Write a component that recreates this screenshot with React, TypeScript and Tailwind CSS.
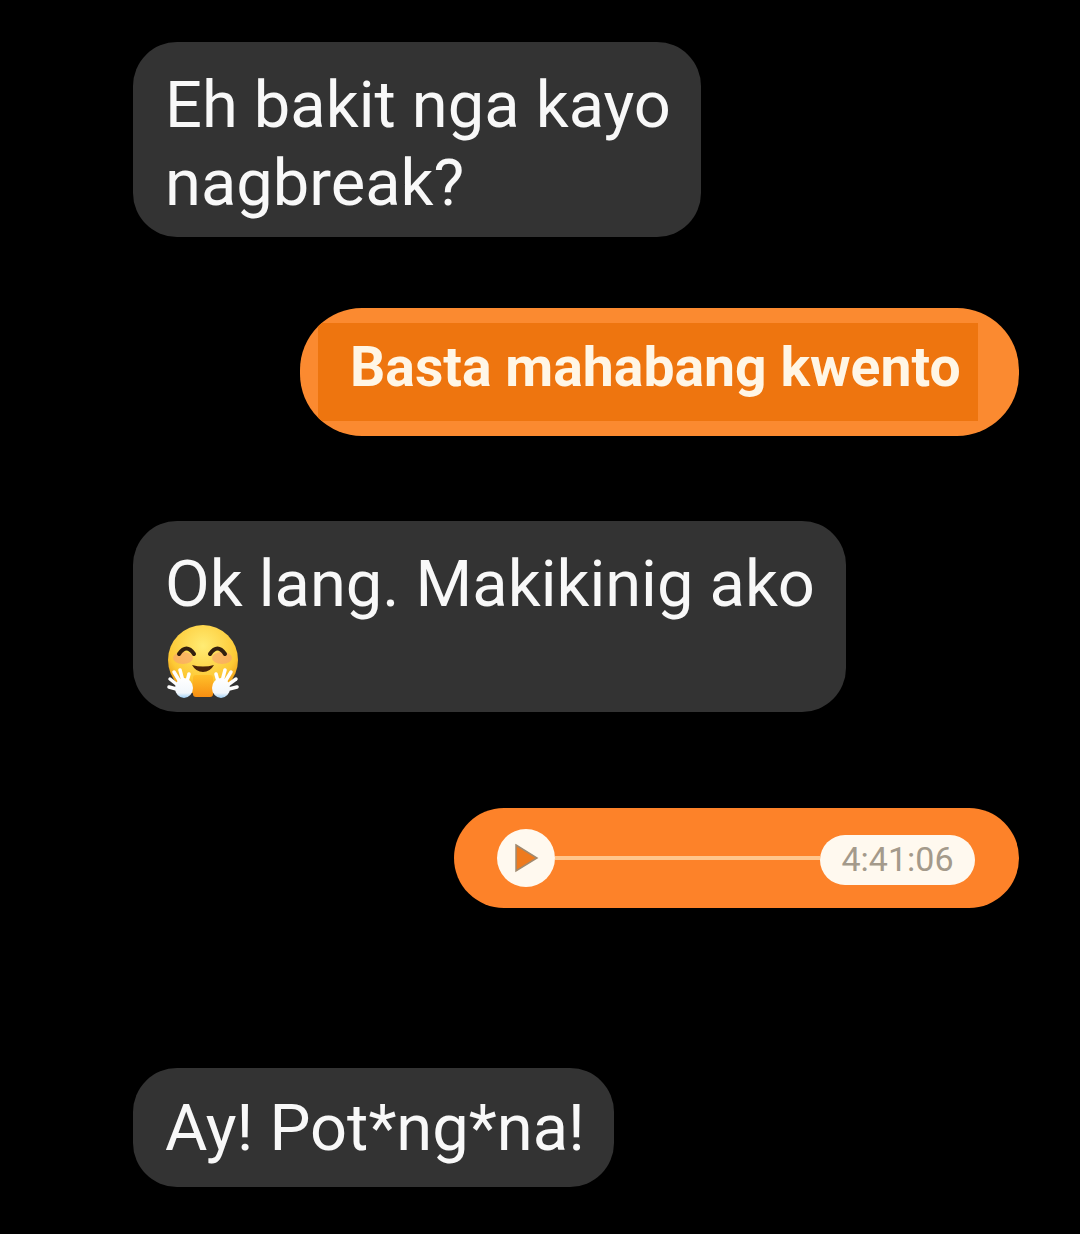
// Chat thread with a voice note
function HugEmoji() {
  return (
    <svg width="76" height="74" viewBox="0 0 76 74" className="block">
      <defs>
        <radialGradient id="face" cx="50%" cy="30%" r="70%">
          <stop offset="0%" stopColor="#ffec74" />
          <stop offset="70%" stopColor="#fdc935" />
          <stop offset="100%" stopColor="#e8920f" />
        </radialGradient>
        <linearGradient id="palm" x1="0" y1="0" x2="0" y2="1">
          <stop offset="0%" stopColor="#ffffff" />
          <stop offset="75%" stopColor="#f2f7fc" />
          <stop offset="100%" stopColor="#9fd0f5" />
        </linearGradient>
        <linearGradient id="arm" x1="0" y1="0" x2="0" y2="1">
          <stop offset="0%" stopColor="#ffc02a" />
          <stop offset="100%" stopColor="#f88f12" />
        </linearGradient>
      </defs>
      <circle cx="37" cy="35" r="35" fill="url(#face)" />
      <ellipse cx="17" cy="33" rx="10" ry="6" fill="#f8a070" opacity="0.6" />
      <ellipse cx="56" cy="33" rx="10" ry="6" fill="#f8a070" opacity="0.6" />
      <path d="M13 29 Q20.500 18 28 29" fill="none" stroke="#33200f" strokeWidth="4" strokeLinecap="round" />
      <path d="M44 29 Q51.500 18 59 29" fill="none" stroke="#33200f" strokeWidth="4" strokeLinecap="round" />
      <path d="M26 40 Q37 43 48 40 Q44 47 37 47 Q30 47 26 40Z" fill="#4a2408" />
      <rect x="27" y="50" width="20" height="22" rx="3" fill="url(#arm)" />
      <g fill="none" stroke="#ffffff" strokeWidth="3.500" strokeLinecap="round">
        <path d="M18 60 L14 45" />
        <path d="M16 60 L8 47" />
        <path d="M14 62 L4 54" />
        <path d="M20 60 L23 49" />
        <path d="M14 65 L3 62" />
        <path d="M55 60 L59 45" />
        <path d="M57 60 L65 47" />
        <path d="M59 62 L70 54" />
        <path d="M53 60 L50 49" />
        <path d="M59 65 L71 62" />
      </g>
      <ellipse cx="18" cy="63" rx="9" ry="10" fill="url(#palm)" />
      <ellipse cx="55" cy="63" rx="9" ry="10" fill="url(#palm)" />
    </svg>
  );
}

function Incoming({ children, className }: { children: React.ReactNode; className: string }) {
  return (
    <div className={`ml-[133px] rounded-[44px] bg-[#333333] pl-[32px] text-[65px] leading-[78px] text-[#f8f8f8] ${className}`}>
      {children}
    </div>
  );
}

export default function App() {
  return (
    <div className="h-[1234px] w-[1080px] overflow-hidden bg-black pt-[42px] font-['Roboto',sans-serif]">
      <Incoming className="h-[195px] w-[568px] pt-[24px]">
        <p>Eh bakit nga kayo</p>
        <p>nagbreak?</p>
      </Incoming>

      <div className="mt-[71px] ml-[300px] flex h-[128px] w-[719px] items-center overflow-hidden rounded-[62px] bg-[#fb8a30] pl-[18px]">
        <div className="flex h-[98px] w-[660px] items-center bg-[#ee750f] pl-[32px] text-[55.300px] font-bold text-[#fff6e6]">
          <span className="-mt-[8px]">Basta mahabang kwento</span>
        </div>
      </div>

      <Incoming className="mt-[85px] h-[191px] w-[713px] pt-[24px]">
        <p>Ok lang. Makikinig ako</p>
        <div className="ml-[1px] mt-[2px]">
          <HugEmoji />
        </div>
      </Incoming>

      <div className="mt-[96px] ml-[454px] flex h-[100px] w-[565px] items-center rounded-[50px] bg-[#fd8229] pl-[43px]">
        <div className="flex h-[58px] w-[58px] shrink-0 items-center justify-center rounded-full bg-[#fff9ef]">
          <svg width="26" height="30" viewBox="0 0 26 30">
            <path d="M3 2 L24 15 L3 28Z" fill="#ee7a1e" stroke="#a08a70" strokeWidth="1.5" />
          </svg>
        </div>
        <div className="h-[4px] w-[265px] bg-[#ffc68c]" />
        <div className="mt-[3px] flex h-[50px] w-[155px] items-center justify-center rounded-full bg-[#fff9ef] text-[34px] text-[#a49a8b]">
          4:41:06
        </div>
      </div>

      <Incoming className="mt-[160px] flex h-[119px] w-[481px] items-center">Ay! Pot*ng*na!</Incoming>
    </div>
  );
}
